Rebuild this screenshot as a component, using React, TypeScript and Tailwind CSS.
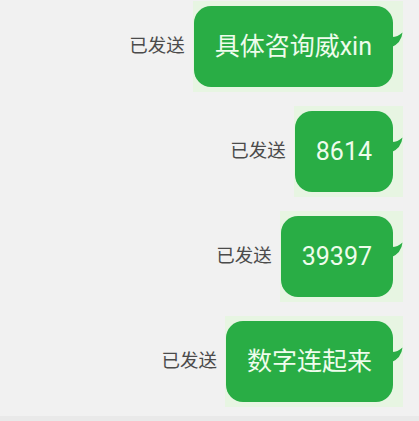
import React from 'react';

const messages = ['具体咨询威xin', '8614', '39397', '数字连起来'];

function Tail() {
  return (
    <svg
      className="absolute right-[-10px] top-[26px]"
      width="12"
      height="16"
      viewBox="0 0 12 16"
    >
      <path d="M0 5 Q6 5.5 11.5 0.5 Q10.5 11 0 15.5 Z" fill="#29ad45" />
    </svg>
  );
}

function SentRow({ text }: { text: string }) {
  return (
    <div className="flex items-center gap-[8px]">
      <span className="text-[18.5px] text-[#4b4b4b] leading-none">已发送</span>
      <div className="bg-[#e7f5e2] py-[5px] pl-[1px] pr-[10px]">
        <div className="relative flex h-[81px] items-center rounded-[17px] bg-[#29ad45] px-[21px]">
          <span className="text-[25px] leading-none text-[#eefcec]">{text}</span>
          <Tail />
        </div>
      </div>
    </div>
  );
}

export default function App() {
  return (
    <div
      className="flex h-[421px] w-[419px] flex-col bg-[#f1f1f1]"
      style={{ fontFamily: 'Roboto, "Noto Sans CJK SC", sans-serif' }}
    >
      <div className="flex flex-1 flex-col items-end gap-[14px] pt-[1px] pr-[16px]">
        {messages.map((m) => (
          <SentRow key={m} text={m} />
        ))}
      </div>
      <div className="h-[5px] bg-[#e9e9e9]" />
    </div>
  );
}
